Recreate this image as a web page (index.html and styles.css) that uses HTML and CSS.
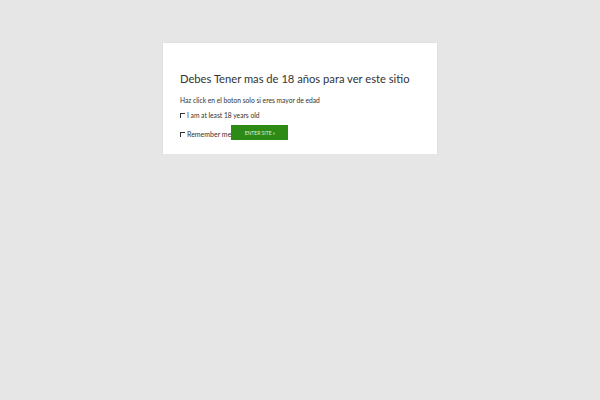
FILE: index.html
```html
<!doctype html>
<html>
<head>
<meta charset="UTF-8">
<title>Age verification</title>
<link rel="stylesheet" href="styles.css">
</head>
<body>
  <div class="overlay">
    <div class="age-box">
      <h2 class="age-title">Debes Tener mas de 18 años para ver este sitio</h2>
      <p class="age-sub">Haz click en el boton solo si eres mayor de edad</p>
      <label class="age-check"><span class="box"></span>I am at least 18 years old</label>
      <div class="age-row">
        <label class="age-check"><span class="box"></span>Remember me</label>
        <button class="enter-btn">Enter Site &raquo;</button>
      </div>
    </div>
  </div>
</body>
</html>
```

FILE: styles.css
```css
body {
  margin: 0;
  background: #e6e6e6;
  font-family: Lato, "Open Sans", sans-serif;
  color: #333;
}

.overlay {
  padding-top: 43px;
  display: flex;
  justify-content: center;
}

.age-box {
  width: 257px;
  background: #fff;
  padding: 29px 0 14px 17px;
  box-shadow: 0 0 2px rgba(0, 0, 0, 0.08);
}

.age-title {
  margin: 0 0 10px;
  font-size: 11.2px;
  line-height: 14px;
  font-weight: 400;
  color: #333;
  white-space: nowrap;
}

.age-sub {
  margin: 0 0 6px;
  font-size: 6.7px;
  line-height: 9px;
}

.age-check {
  display: flex;
  align-items: center;
  font-size: 6.7px;
  line-height: 9px;
}

.box {
  width: 4px;
  height: 4px;
  border-top: 1px solid #333;
  border-left: 1px solid #333;
  margin-right: 2px;
}

.age-row {
  display: flex;
  align-items: flex-end;
  margin-top: 5px;
}

.age-row .age-check {
  padding-bottom: 1.5px;
  font-size: 7px;
}

.enter-btn {
  width: 57px;
  height: 15px;
  border: none;
  background: #2d8a14;
  color: #dfeedd;
  font-family: Lato, sans-serif;
  font-size: 5px;
  text-transform: uppercase;
  padding: 0;
}
```
